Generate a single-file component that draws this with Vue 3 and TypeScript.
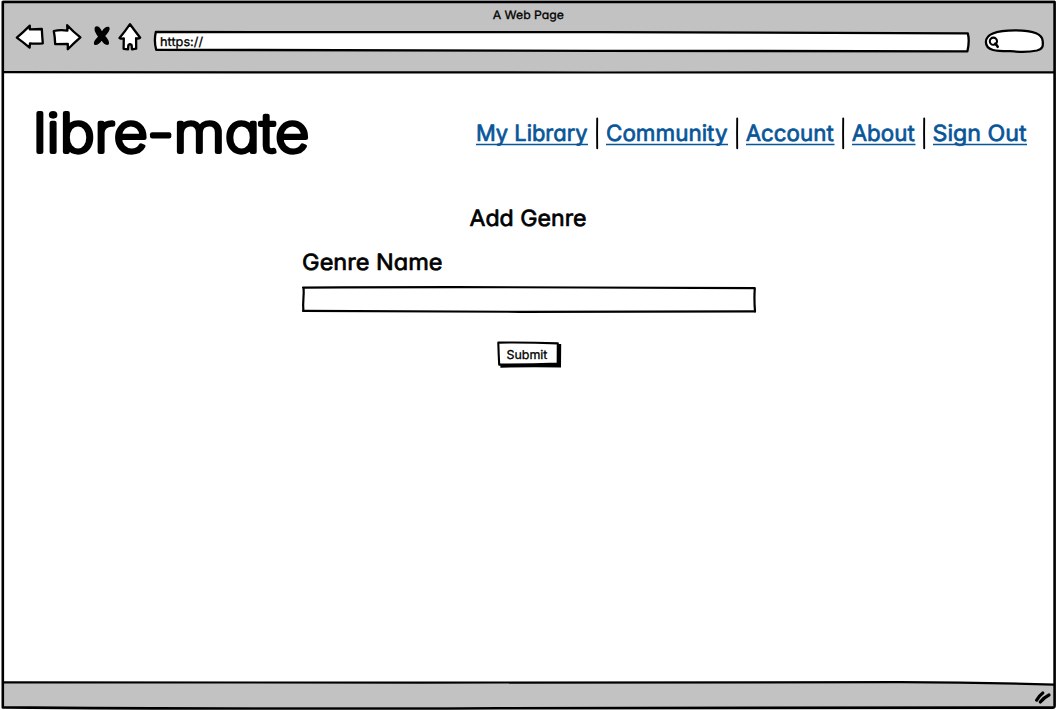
<script setup lang="ts">
interface NavLink {
  label: string
  width: number
  textStart: number
  textWidth: number
  gapAfter: number
}

const links: NavLink[] = [
  { label: 'My Library', width: 112, textStart: 0, textWidth: 111.5, gapAfter: 18 },
  { label: 'Community', width: 122, textStart: 0, textWidth: 121.5, gapAfter: 18 },
  { label: 'Account', width: 88.5, textStart: -0.3, textWidth: 88, gapAfter: 17.5 },
  { label: 'About', width: 63.5, textStart: -0.3, textWidth: 63, gapAfter: 17.5 },
  { label: 'Sign Out', width: 94, textStart: -0.4, textWidth: 94, gapAfter: 0 },
]
</script>

<template>
  <div class="window">
    <header class="chrome">
      <div class="caption">
        <svg width="72" height="24">
          <text class="ink small" x="-0.3" y="18.7" textLength="71.3" lengthAdjust="spacingAndGlyphs" font-size="11.6">A Web Page</text>
        </svg>
      </div>
      <div class="toolbar">
        <svg class="back" width="30" height="30" viewBox="15 22 30 30">
          <path class="shape" d="M16.8 37.6Q23 32.5 29.8 25.6L29.8 29.4Q36 29 41.8 29Q42.2 36 42.8 43.3Q36 44 30 43.4L29.6 47.6Q23 42 16.8 37.6Z" />
        </svg>
        <svg class="forward" width="30" height="30" viewBox="52 22 30 30">
          <path class="shape" d="M53.8 31Q60 29.6 67.4 30.6L67.2 25.2Q73 31.5 80.4 37.4Q74 43 67.8 49.2L67.8 43.8Q61 44 55.2 44.2Q55 37 53.8 31Z" />
        </svg>
        <svg class="stop" width="18" height="30" viewBox="93 22 18 30">
          <path d="M95 27C97 25 100 26.8 102 31.2C104 27.6 107 26 109.3 27.2C110.6 29.5 108 33 105.2 36C108 38.8 110 42.5 108.6 44.6C106 46 103.5 43.4 101.6 40.8C99.5 43.6 96.6 45.9 94.4 44.8C92.8 42 95.4 39.5 98 36.4C95.2 33 93.8 29.6 95 27Z" />
        </svg>
        <svg class="home" width="25" height="30" viewBox="118 22 25 30">
          <path class="shape" d="M130 24.2Q135 31 140.2 37.7Q138 39 136.1 38.2L136.2 48.7L132 49.4L131.6 45Q130 43.6 128.4 45L128 49.3L123.6 48.8L123.8 38.5Q121 39 119.5 38Q125 31.5 130 24.2Z" />
        </svg>
        <div class="address">
          <svg width="818" height="26" viewBox="153 28 818 26">
            <path class="shape" d="M155.8 32Q400 31.2 600 32.2T967.8 33.3Q969.8 41 967.4 51.3Q800 51.8 600 50.8T156.2 49.8Q153.8 41 155.8 32Z" />
            <text class="ink small" x="160" y="46" textLength="43" lengthAdjust="spacingAndGlyphs" font-size="12.2">https://</text>
          </svg>
        </div>
        <svg class="search" width="61" height="28" viewBox="984 27 61 28">
          <path class="shape" d="M985.9 42C985.9 34.5 994 30.3 1015 30.3C1035 30.3 1042.4 34 1042.7 41C1043.2 46 1043 49 1037 50.5C1028 52.5 1018 52 1010 51.2C997 51.3 985.9 51 985.9 42Z" />
          <circle class="lens" cx="993.4" cy="41.2" r="3.6" />
          <path class="lens handle" d="M995.4 43.6L997.7 46.8" />
        </svg>
      </div>
    </header>

    <main class="page">
      <div class="masthead">
        <h1 class="brand">
          <svg width="278" height="60" viewBox="34 100 278 60">
            <text class="ink brand-text" x="33.2" y="151.8" textLength="276" lengthAdjust="spacingAndGlyphs" font-size="53.6">libre-mate</text>
          </svg>
        </h1>
        <nav class="nav">
          <template v-for="link in links" :key="link.label">
            <a class="link">
              <svg :width="link.width" height="34">
                <text class="ink blue" :x="link.textStart" y="24.7" :textLength="link.textWidth" lengthAdjust="spacingAndGlyphs" font-size="22.4">{{ link.label }}</text>
                <line class="rule" x1="0" y1="28.6" :x2="link.width" y2="28.6" />
              </svg>
            </a>
            <svg v-if="link.gapAfter" class="divider" :width="link.gapAfter" height="34">
              <path d="M9.2 2.5Q9 16 9.2 32.3" />
            </svg>
          </template>
        </nav>
      </div>

      <form class="form" @submit.prevent>
        <h2 class="heading">
          <svg width="118" height="30">
            <text class="ink" x="0.5" y="22.6" textLength="117" lengthAdjust="spacingAndGlyphs" font-size="22.4">Add Genre</text>
          </svg>
        </h2>
        <label class="field">
          <svg class="field-label" width="142" height="30">
            <text class="ink" x="-0.9" y="22.6" textLength="140.4" lengthAdjust="spacingAndGlyphs" font-size="22.4">Genre Name</text>
          </svg>
          <svg class="box" width="456" height="28" viewBox="301 286 456 28">
            <path class="edge" d="M303.6 288.2Q303.9 293 303.4 299T303.4 311" />
            <path class="edge" d="M303 287.6Q450 286.8 580 287.5T754.8 288.2Q754 299 755 311.4" />
            <path class="edge" d="M303 310.8Q430 311.6 520 311.8T755 311.4" />
          </svg>
        </label>
        <button class="submit" type="submit">
          <svg width="66" height="28" viewBox="496 341 66 28">
            <path d="M500 345L561.2 344L561 367.6Q530 367 500.4 367.8Z" />
            <path class="face" d="M498.3 342.6Q528 342.2 557.8 343.4L557.7 363.6Q530 364.6 499.2 364.6Q498.6 354 498.3 342.6Z" />
            <text class="ink small" x="506.4" y="358.8" textLength="41" lengthAdjust="spacingAndGlyphs" font-size="12.2">Submit</text>
          </svg>
        </button>
      </form>
    </main>

    <footer class="status">
      <svg width="20" height="18" viewBox="1033 689 20 18">
        <path class="grip" d="M1036.6 700.2Q1038.8 696 1042.8 693M1040.3 702Q1043.8 697.6 1049 695" />
      </svg>
    </footer>

    <svg class="frame" width="1057" height="710">
      <path class="paper" d="M900 682.2Q980 682.4 1054 684.6V681H900Z" />
      <path class="outline" d="M2.8 2Q500 1.6 1054.6 2Q1054.2 350 1054.6 706Q1054.5 708 1052 707.6Q800 707.2 500 708.2T2.8 707.4Q2.2 350 2.8 2Z" />
      <path class="outline thin" d="M3 72.2Q300 72.4 600 72.5T1054 72.3" />
      <path class="outline thin" d="M3 682.4Q200 683.4 420 682.6T900 682.2Q980 682.4 1054 684.6" />
    </svg>
  </div>
</template>

<style>
body {
  margin: 0;
  background: #fff;
}
</style>

<style scoped>
.window {
  position: relative;
  display: flex;
  flex-direction: column;
  width: 1057px;
  height: 710px;
  overflow: hidden;
  font-family: Inter, "Noto Sans", sans-serif;
}
svg {
  display: block;
  flex: none;
  overflow: visible;
}
.chrome {
  box-sizing: border-box;
  height: 72px;
  margin: 0 2px 0 3px;
  background: #c2c2c2;
}
.caption {
  height: 22px;
  padding-left: 489.5px;
}
.toolbar {
  display: flex;
  align-items: flex-start;
  padding-left: 12px;
}
.forward {
  margin-left: 7px;
}
.stop {
  margin-left: 11px;
}
.home {
  margin-left: 7px;
}
.address {
  margin: 6px 0 0 10px;
}
.search {
  margin: 5px 0 0 13px;
}
.shape {
  fill: #fff;
  stroke: #000;
  stroke-width: 2.3;
  stroke-linejoin: round;
}
.lens {
  fill: none;
  stroke: #000;
  stroke-width: 2.1;
}
.handle {
  stroke-width: 2.6;
  stroke-linecap: round;
}
.ink {
  font-family: Inter, "Noto Sans", sans-serif;
  font-weight: 400;
  font-feature-settings: "cv11" 1;
  fill: #000;
  stroke: #000;
  stroke-width: 0.7;
  stroke-linejoin: round;
  text-rendering: geometricPrecision;
}
.small {
  stroke-width: 0.3;
}
.brand-text {
  font-weight: 200;
  stroke-width: 4;
}
.blue {
  fill: #085599;
  stroke: #085599;
}
.page {
  flex: 1;
}
.masthead {
  display: flex;
  align-items: flex-start;
  padding: 28px 0 0 34px;
}
.brand,
.heading {
  margin: 0;
}
.nav {
  display: flex;
  padding: 16px 0 0 163.5px;
}
.divider path {
  fill: none;
  stroke: #000;
  stroke-width: 1.9;
  stroke-linecap: round;
}
.rule {
  stroke: #085599;
  stroke-width: 1.5;
}
.form {
  width: 456px;
  margin: 43px 0 0 301px;
}
.heading {
  padding-left: 168px;
}
.field {
  display: block;
  padding-top: 14px;
}
.field-label {
  margin-left: 1.5px;
}
.box {
  margin-top: 9px;
}
.edge {
  fill: none;
  stroke: #000;
  stroke-width: 2.2;
  stroke-linecap: round;
  stroke-linejoin: round;
}
.submit {
  display: block;
  margin: 27px 0 0 195px;
  padding: 0;
  border: 0;
  background: none;
}
.face {
  fill: #fff;
  stroke: #000;
  stroke-width: 2.1;
  stroke-linejoin: round;
}
.status {
  display: flex;
  box-sizing: border-box;
  justify-content: flex-end;
  height: 25px;
  margin: 0 2px 3px 3px;
  padding: 7px 2px 0 0;
  background: #c2c2c2;
}
.frame {
  position: absolute;
  inset: 0;
  pointer-events: none;
}
.paper {
  fill: #fff;
}
.outline {
  fill: none;
  stroke: #000;
  stroke-width: 2.6;
  stroke-linejoin: round;
}
.thin {
  stroke-width: 2.2;
}
.grip {
  fill: none;
  stroke: #000;
  stroke-width: 3.2;
  stroke-linecap: round;
}
</style>
